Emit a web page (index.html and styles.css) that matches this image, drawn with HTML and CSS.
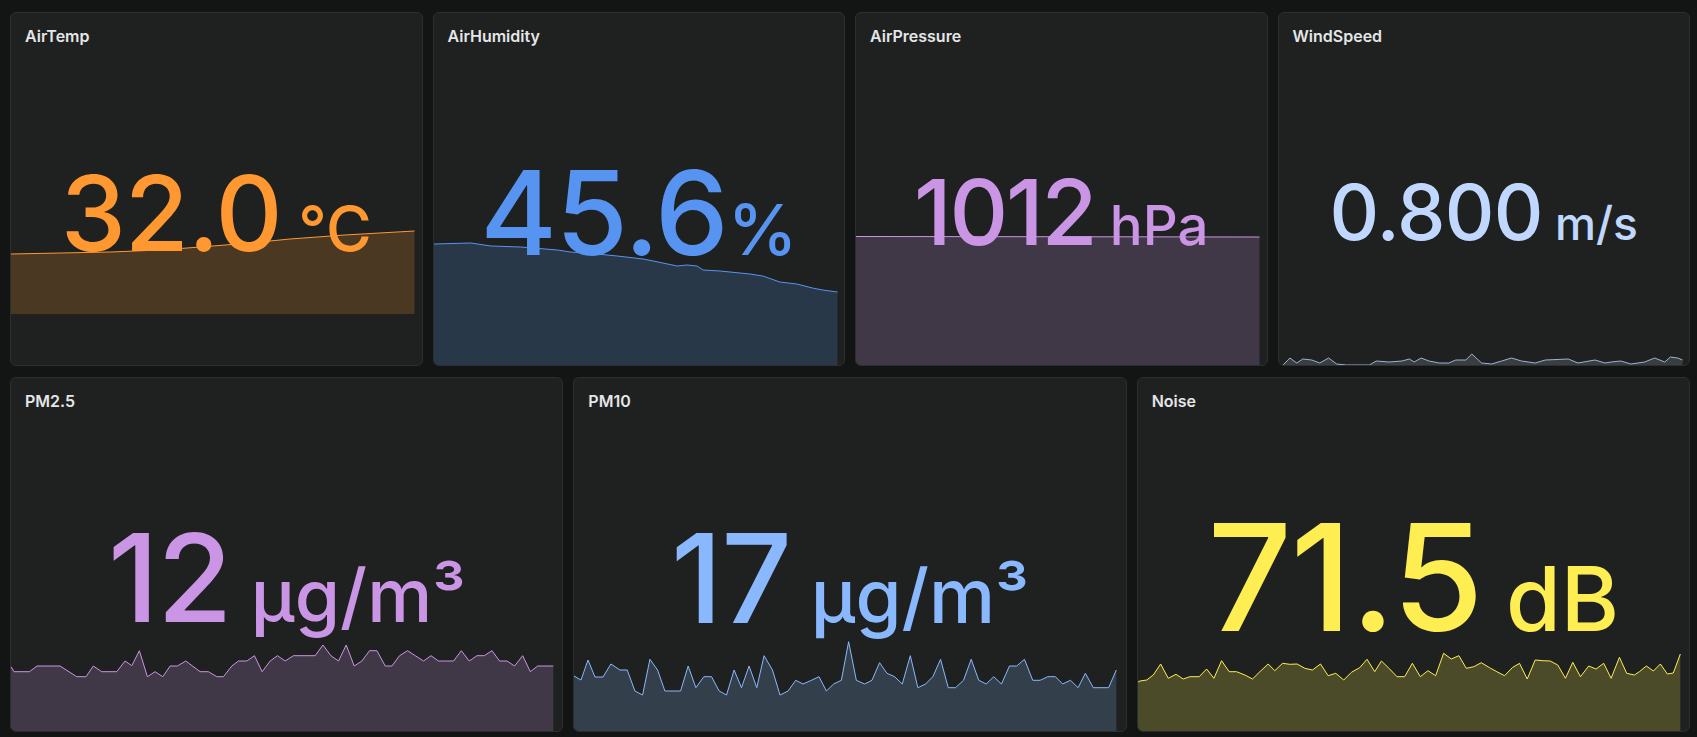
FILE: index.html
```html
<!DOCTYPE html>
<html lang="en">
<head>
<meta charset="utf-8">
<title>Environment</title>
<link rel="stylesheet" href="styles.css">
</head>
<body>
<div class="dash">
  <div class="row row-top">
    <section class="panel c-orange">
      <header class="panel-title">AirTemp</header>
      <svg class="spark spark-temp" viewBox="0 0 1000 99" preserveAspectRatio="none">
        <path class="area" d="M0 39 L123 38 L247 37 L370 35 L469 32 L593 28 L691 24 L827 20 L1000 16 L1000 99 L0 99 Z"/>
        <path class="line" d="M0 39 L123 38 L247 37 L370 35 L469 32 L593 28 L691 24 L827 20 L1000 16"/>
      </svg>
      <div class="panel-body"><div class="value val-temp">32.0<span class="unit"> °C</span></div></div>
    </section>
    <section class="panel c-blue">
      <header class="panel-title">AirHumidity</header>
      <svg class="spark spark-hum" viewBox="0 0 1000 130" preserveAspectRatio="none">
        <path class="area" d="M0 9 L91 8 L141 11 L215 12 L306 15 L338 17 L405 19 L454 21 L519 24 L603 31 L627 30 L652 31 L667 35 L709 36 L783 39 L815 41 L857 47 L899 49 L938 53 L963 55 L1000 57 L1000 130 L0 130 Z"/>
        <path class="line" d="M0 9 L91 8 L141 11 L215 12 L306 15 L338 17 L405 19 L454 21 L519 24 L603 31 L627 30 L652 31 L667 35 L709 36 L783 39 L815 41 L857 47 L899 49 L938 53 L963 55 L1000 57"/>
      </svg>
      <div class="panel-body"><div class="value val-hum">45.6<span class="unit">%</span></div></div>
    </section>
    <section class="panel c-purple">
      <header class="panel-title">AirPressure</header>
      <svg class="spark spark-pres" viewBox="0 0 1000 135" preserveAspectRatio="none">
        <path class="area" d="M0 6.5 L1000 7 L1000 135 L0 135 Z"/>
        <path class="line" d="M0 6.5 L1000 7"/>
      </svg>
      <div class="panel-body"><div class="value val-pres">1012<span class="unit"> hPa</span></div></div>
    </section>
    <section class="panel c-sky">
      <header class="panel-title">WindSpeed</header>
      <svg class="spark spark-wind" viewBox="0 0 1000 15" preserveAspectRatio="none">
        <path class="area" d="M10 15 L27 8 L44 13 L59 9 L81 10 L101 13 L123 8 L143 14 L167 15 L224 15 L241 11 L273 12 L305 11 L323 9 L335 12 L352 8 L372 11 L397 13 L421 13 L438 10 L463 10 L478 4 L502 13 L527 14 L552 11 L576 8 L601 11 L635 13 L660 10 L717 9 L741 13 L783 10 L808 13 L823 12 L847 11 L872 14 L906 12 L931 8 L956 12 L970 7 L988 8 L1000 10 L1000 15 Z"/>
        <path class="line" d="M10 15 L27 8 L44 13 L59 9 L81 10 L101 13 L123 8 L143 14 L167 15 L224 15 L241 11 L273 12 L305 11 L323 9 L335 12 L352 8 L372 11 L397 13 L421 13 L438 10 L463 10 L478 4 L502 13 L527 14 L552 11 L576 8 L601 11 L635 13 L660 10 L717 9 L741 13 L783 10 L808 13 L823 12 L847 11 L872 14 L906 12 L931 8 L956 12 L970 7 L988 8 L1000 10"/>
      </svg>
      <div class="panel-body"><div class="value val-wind">0.800<span class="unit"> m/s</span></div></div>
    </section>
  </div>
  <div class="row row-bottom">
    <section class="panel c-purple">
      <header class="panel-title">PM2.5</header>
      <svg class="spark spark-pm" viewBox="0 0 1000 96" preserveAspectRatio="none">
        <path class="area" d="M0 31.7 L5.7 36.7 L34 36.7 L48 31 L90.4 31 L121.2 41.7 L138.4 41.7 L151.8 31 L167.3 36.7 L195 36.7 L210.3 26 L222.7 30.7 L236.7 15.7 L251.5 41.7 L265.7 36.7 L279.9 41.7 L293.4 31 L306.8 31 L322.3 26 L348.7 36.7 L364 36.7 L379.5 41.7 L391.7 41.7 L407.2 31 L419.4 26 L434.9 26 L448.9 20.7 L463.1 36.7 L477.9 26 L491.3 20.7 L505.5 26 L520.8 20.7 L560.9 20.7 L575.1 10 L589.9 20.7 L603.9 26 L618.1 10 L632.8 31 L647 26 L661.1 15.7 L674.7 15.7 L690 31 L702.4 31 L716.4 20.7 L731.2 15.7 L745.4 20.7 L760.7 26 L774.4 20.7 L788.4 26 L816.1 26 L830.3 15.7 L845 26 L859.2 20.7 L872.7 20.7 L886.9 15.7 L900.9 26 L914.6 26 L928.6 31 L943.4 20.7 L957.6 36.7 L971 31 L1000 31 L1000 96 L0 96 Z"/>
        <path class="line" d="M0 31.7 L5.7 36.7 L34 36.7 L48 31 L90.4 31 L121.2 41.7 L138.4 41.7 L151.8 31 L167.3 36.7 L195 36.7 L210.3 26 L222.7 30.7 L236.7 15.7 L251.5 41.7 L265.7 36.7 L279.9 41.7 L293.4 31 L306.8 31 L322.3 26 L348.7 36.7 L364 36.7 L379.5 41.7 L391.7 41.7 L407.2 31 L419.4 26 L434.9 26 L448.9 20.7 L463.1 36.7 L477.9 26 L491.3 20.7 L505.5 26 L520.8 20.7 L560.9 20.7 L575.1 10 L589.9 20.7 L603.9 26 L618.1 10 L632.8 31 L647 26 L661.1 15.7 L674.7 15.7 L690 31 L702.4 31 L716.4 20.7 L731.2 15.7 L745.4 20.7 L760.7 26 L774.4 20.7 L788.4 26 L816.1 26 L830.3 15.7 L845 26 L859.2 20.7 L872.7 20.7 L886.9 15.7 L900.9 26 L914.6 26 L928.6 31 L943.4 20.7 L957.6 36.7 L971 31 L1000 31"/>
      </svg>
      <div class="panel-body"><div class="value val-pm25">12<span class="unit"> µg/m³</span></div></div>
    </section>
    <section class="panel c-lightblue">
      <header class="panel-title">PM10</header>
      <svg class="spark spark-pm" viewBox="0 0 1000 96" preserveAspectRatio="none">
        <path class="area" d="M0 41 L12.9 45 L25.8 25 L38.7 42 L53.4 42 L68.1 29 L84.7 35 L98.2 35 L112.3 56 L126.5 60 L140 24.3 L154.1 35 L167.6 56 L196.5 56 L210.5 31 L224.7 52.7 L239.4 41.7 L253.6 41.7 L267.6 56 L281.2 60 L295.2 35 L308.8 52.7 L322.8 31 L337 52.7 L350.5 20.7 L365.9 35 L379.9 60 L394.7 56 L408.8 45.3 L422.3 49 L437.8 45.3 L451.7 41.7 L465.4 56 L478.8 49 L493 45.3 L506.4 6.7 L520.6 45.3 L535.9 49 L549.4 45.3 L563.5 27.7 L577 38.3 L591.2 41.7 L605.3 49 L620.1 20.7 L634.1 52.7 L648.3 49 L661.7 41.7 L675.9 24.3 L690.1 52.7 L703.5 52.7 L718.2 45.3 L732.4 24.3 L746.4 45.3 L760 49 L774 41.7 L788.2 49 L802.9 31 L816.4 31 L830.6 24.3 L845.9 45.3 L859.5 45.3 L873.5 41.7 L887.7 41.7 L901.1 49 L915.3 45.3 L929.5 52.7 L942.9 38.3 L957.6 52.7 L985.8 52.7 L1000 35 L1000 96 L0 96 Z"/>
        <path class="line" d="M0 41 L12.9 45 L25.8 25 L38.7 42 L53.4 42 L68.1 29 L84.7 35 L98.2 35 L112.3 56 L126.5 60 L140 24.3 L154.1 35 L167.6 56 L196.5 56 L210.5 31 L224.7 52.7 L239.4 41.7 L253.6 41.7 L267.6 56 L281.2 60 L295.2 35 L308.8 52.7 L322.8 31 L337 52.7 L350.5 20.7 L365.9 35 L379.9 60 L394.7 56 L408.8 45.3 L422.3 49 L437.8 45.3 L451.7 41.7 L465.4 56 L478.8 49 L493 45.3 L506.4 6.7 L520.6 45.3 L535.9 49 L549.4 45.3 L563.5 27.7 L577 38.3 L591.2 41.7 L605.3 49 L620.1 20.7 L634.1 52.7 L648.3 49 L661.7 41.7 L675.9 24.3 L690.1 52.7 L703.5 52.7 L718.2 45.3 L732.4 24.3 L746.4 45.3 L760 49 L774 41.7 L788.2 49 L802.9 31 L816.4 31 L830.6 24.3 L845.9 45.3 L859.5 45.3 L873.5 41.7 L887.7 41.7 L901.1 49 L915.3 45.3 L929.5 52.7 L942.9 38.3 L957.6 52.7 L985.8 52.7 L1000 35"/>
      </svg>
      <div class="panel-body"><div class="value val-pm10">17<span class="unit"> µg/m³</span></div></div>
    </section>
    <section class="panel c-yellow">
      <header class="panel-title">Noise</header>
      <svg class="spark spark-noise" viewBox="0 0 1000 91" preserveAspectRatio="none">
        <path class="area" d="M0 42 L3.7 41 L16 40 L28.2 35 L41.8 24 L55.8 38.3 L70 34.3 L83.4 39 L95.8 36.7 L112.9 36.7 L126.5 29 L140 38.3 L154.1 20.7 L168.1 31.7 L181.8 31.7 L197.1 35 L211.2 39 L224.7 31.7 L240 24 L252.3 30.7 L266.5 23.3 L279.9 24.3 L293.4 24 L307.6 28.3 L321.7 30 L336.5 24 L350.5 35.7 L364.6 33.3 L379.4 40 L393.5 32.3 L408.8 27.7 L422.3 19.3 L436.5 31.7 L448.8 21 L464.1 29 L477.5 36.7 L491.7 36.7 L505.9 23.3 L520.6 36.7 L534.6 30.7 L548.8 35.7 L563.5 13.3 L577.7 19 L591.7 15.7 L605.3 28.3 L619.3 26.7 L633 22.7 L648.3 27.7 L661.7 31.7 L675.9 35.7 L690.1 27.7 L703.5 23.3 L717.7 39 L732.4 20 L746.4 20.7 L760 21 L774 25 L788.2 38.3 L801.7 22.3 L815.8 36.7 L831.1 26 L844.7 29 L858.7 23.3 L872.4 38.3 L887.7 17.3 L901.1 33.3 L915.3 35 L924.5 31.7 L937.4 26 L950.3 31 L963.2 24 L976.1 34 L987.1 33 L1000 14 L1000 91 L0 91 Z"/>
        <path class="line" d="M0 42 L3.7 41 L16 40 L28.2 35 L41.8 24 L55.8 38.3 L70 34.3 L83.4 39 L95.8 36.7 L112.9 36.7 L126.5 29 L140 38.3 L154.1 20.7 L168.1 31.7 L181.8 31.7 L197.1 35 L211.2 39 L224.7 31.7 L240 24 L252.3 30.7 L266.5 23.3 L279.9 24.3 L293.4 24 L307.6 28.3 L321.7 30 L336.5 24 L350.5 35.7 L364.6 33.3 L379.4 40 L393.5 32.3 L408.8 27.7 L422.3 19.3 L436.5 31.7 L448.8 21 L464.1 29 L477.5 36.7 L491.7 36.7 L505.9 23.3 L520.6 36.7 L534.6 30.7 L548.8 35.7 L563.5 13.3 L577.7 19 L591.7 15.7 L605.3 28.3 L619.3 26.7 L633 22.7 L648.3 27.7 L661.7 31.7 L675.9 35.7 L690.1 27.7 L703.5 23.3 L717.7 39 L732.4 20 L746.4 20.7 L760 21 L774 25 L788.2 38.3 L801.7 22.3 L815.8 36.7 L831.1 26 L844.7 29 L858.7 23.3 L872.4 38.3 L887.7 17.3 L901.1 33.3 L915.3 35 L924.5 31.7 L937.4 26 L950.3 31 L963.2 24 L976.1 34 L987.1 33 L1000 14"/>
      </svg>
      <div class="panel-body"><div class="value val-noise">71.5<span class="unit"> dB</span></div></div>
    </section>
  </div>
</div>
</body>
</html>
```

FILE: styles.css
```css
* { box-sizing: border-box; }

html, body {
  margin: 0;
  padding: 0;
  background: #121514;
  font-family: Inter, "Noto Sans", "Liberation Sans", sans-serif;
}

.dash {
  width: 1697px;
  height: 737px;
  padding: 12px 7px 5px 10px;
  display: flex;
  flex-direction: column;
  gap: 11px;
}

.row {
  display: grid;
  gap: 10px;
}

.row-top {
  grid-template-columns: repeat(4, 1fr);
  height: 354px;
}

.row-bottom {
  grid-template-columns: repeat(3, 1fr);
  height: 355px;
}

.panel {
  position: relative;
  display: flex;
  flex-direction: column;
  background: #1f2120;
  border: 1px solid #2c2f2f;
  border-radius: 6px;
  overflow: hidden;
}

.panel-title {
  position: relative;
  z-index: 1;
  height: 47px;
  padding: 14px 14px 0;
  font-size: 16px;
  line-height: 19px;
  font-weight: 600;
  color: #e4e6e7;
  flex: none;
}

.panel-body {
  position: relative;
  z-index: 1;
  flex: 1;
  display: flex;
  align-items: center;
  justify-content: center;
}

.value {
  line-height: 1;
  font-weight: 500;
  white-space: pre;
  letter-spacing: -0.01em;
}

.unit {
  font-size: 0.6em;
  letter-spacing: 0;
}

.val-temp { font-size: 104px; }
.val-hum { font-size: 117px; }
.val-pres { font-size: 91px; letter-spacing: -0.025em; }
.val-wind { font-size: 77px; }
.val-pm25 { font-size: 122px; }
.val-pm10 { font-size: 124px; }
.val-noise { font-size: 148px; }

.spark {
  position: absolute;
  left: 0;
  bottom: 0;
  width: calc(100% - 7px);
  z-index: 0;
  overflow: visible;
}

.row-bottom .spark { width: calc(100% - 9px); }

.spark .area {
  fill: currentColor;
  fill-opacity: 0.2;
  stroke: none;
}

.spark .line {
  fill: none;
  stroke: currentColor;
  stroke-width: 1;
  vector-effect: non-scaling-stroke;
  stroke-linejoin: round;
}

.spark-temp { height: 99px; bottom: 51px; }
.spark-hum { height: 130px; }
.spark-pres { height: 135px; }
.spark-wind { height: 15px; }
.spark-pm { height: 96px; }
.spark-noise { height: 91px; }

.c-orange { color: #ff9830; }
.c-blue { color: #5794f2; }
.c-purple { color: #ca95e5; }
.c-sky { color: #c0d8ff; }
.c-lightblue { color: #8ab8ff; }
.c-yellow { color: #ffee52; }

.c-sky .spark { color: #9fb3cf; }
```
